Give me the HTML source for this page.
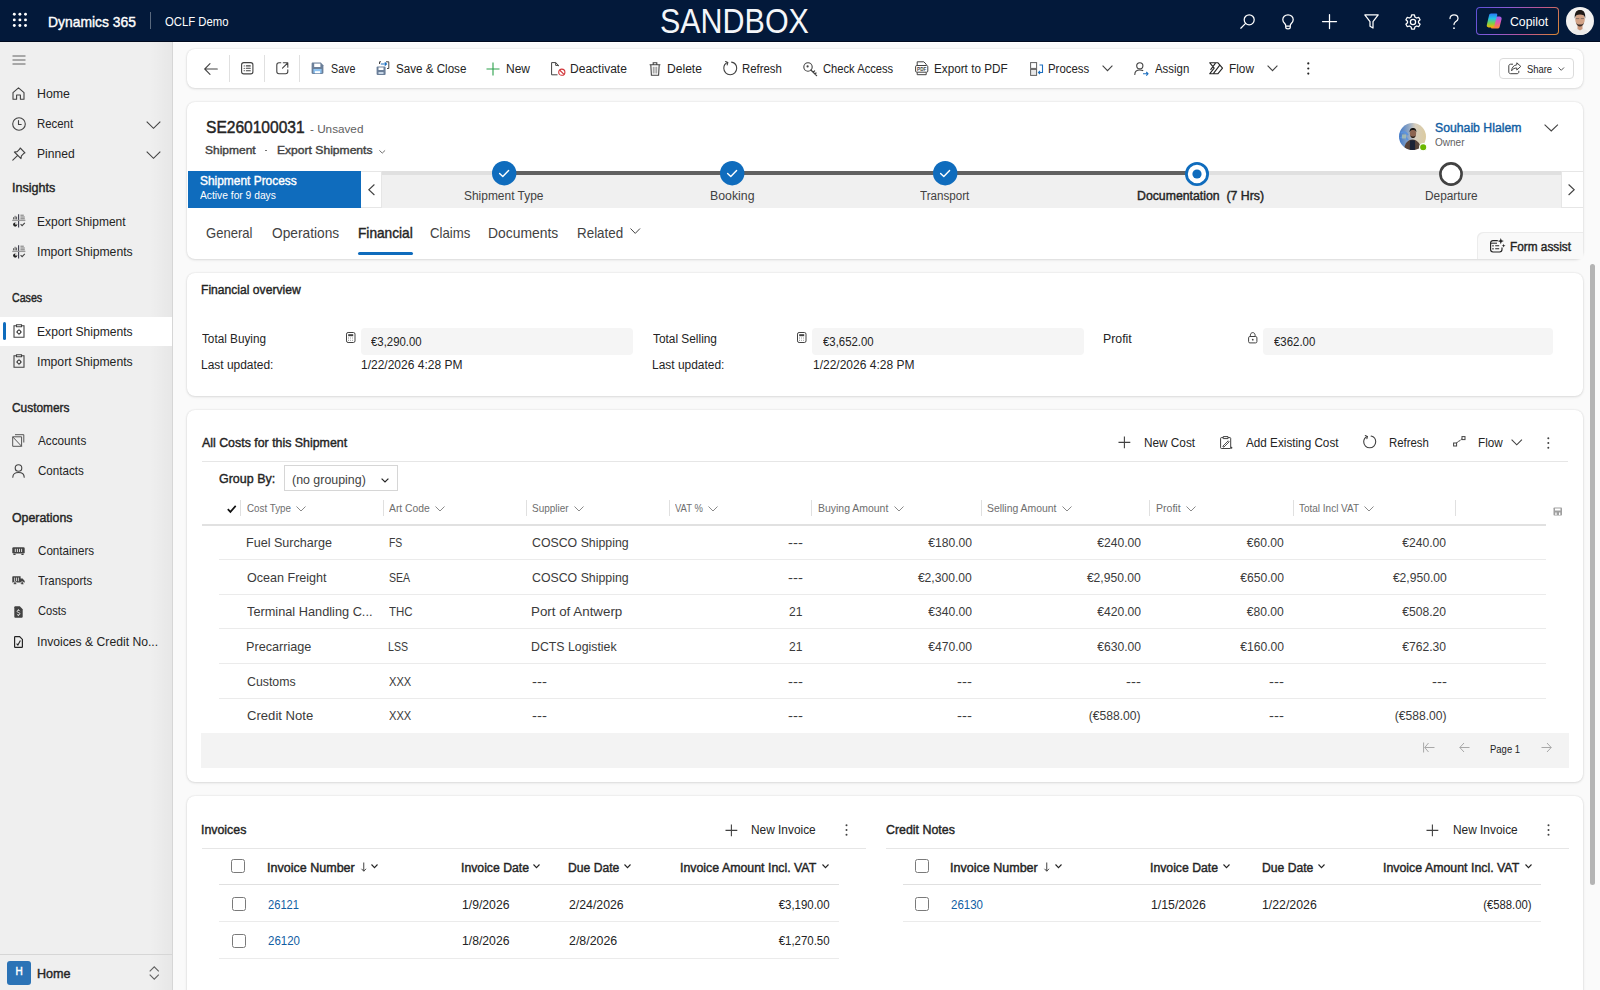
<!DOCTYPE html>
<html><head><meta charset="utf-8"><style>
html,body{margin:0;padding:0;width:1600px;height:990px;overflow:hidden;background:#fafafa;}
body{position:relative;font-family:"Liberation Sans", sans-serif;}
.t{position:absolute;white-space:pre;}
svg{overflow:visible}
</style></head><body>
<div style="position:absolute;left:0px;top:0px;width:1600px;height:42px;background:#03193a"></div>
<div style="position:absolute;left:0px;top:41px;width:1600px;height:1px;background:#000a1f"></div>
<div style="position:absolute;left:0px;top:42px;width:172px;height:948px;background:#efefef"></div>
<div style="position:absolute;left:150px;top:42px;width:22px;height:948px;background:linear-gradient(to right, rgba(0,0,0,0), rgba(0,0,0,0.035))"></div>
<div style="position:absolute;left:172px;top:42px;width:1px;height:948px;background:#d6d6d6"></div>
<div style="position:absolute;left:173px;top:42px;width:1427px;height:1px;background:#ffffff"></div>
<div style="position:absolute;left:187px;top:49px;width:1396px;height:39px;background:#fff;border-radius:8px;box-shadow:0 0 2px rgba(0,0,0,0.12),0 1px 3px rgba(0,0,0,0.10)"></div>
<div style="position:absolute;left:187px;top:102px;width:1396px;height:157px;background:#fff;border-radius:8px;box-shadow:0 0 2px rgba(0,0,0,0.12),0 1px 3px rgba(0,0,0,0.10)"></div>
<div style="position:absolute;left:187px;top:273px;width:1396px;height:123px;background:#fff;border-radius:8px;box-shadow:0 0 2px rgba(0,0,0,0.12),0 1px 3px rgba(0,0,0,0.10)"></div>
<div style="position:absolute;left:187px;top:410px;width:1396px;height:372px;background:#fff;border-radius:8px;box-shadow:0 0 2px rgba(0,0,0,0.12),0 1px 3px rgba(0,0,0,0.10)"></div>
<div style="position:absolute;left:187px;top:796px;width:1396px;height:220px;background:#fff;border-radius:8px;box-shadow:0 0 2px rgba(0,0,0,0.12),0 1px 3px rgba(0,0,0,0.10)"></div>
<div style="position:absolute;left:1590px;top:264px;width:5px;height:621px;background:#b4b4b4;border-radius:3px"></div>
<svg style="position:absolute;left:13px;top:13px;" width="14" height="14" viewBox="0 0 14 14" fill="none"><circle cx="1.3" cy="1.3" r="1.45" fill="#fff"/><circle cx="1.3" cy="6.9" r="1.45" fill="#fff"/><circle cx="1.3" cy="12.5" r="1.45" fill="#fff"/><circle cx="6.9" cy="1.3" r="1.45" fill="#fff"/><circle cx="6.9" cy="6.9" r="1.45" fill="#fff"/><circle cx="6.9" cy="12.5" r="1.45" fill="#fff"/><circle cx="12.5" cy="1.3" r="1.45" fill="#fff"/><circle cx="12.5" cy="6.9" r="1.45" fill="#fff"/><circle cx="12.5" cy="12.5" r="1.45" fill="#fff"/></svg>
<div style="position:absolute;left:150px;top:12px;width:1px;height:17px;background:rgba(255,255,255,0.35)"></div>
<svg style="position:absolute;left:1240px;top:14px;" width="15" height="15" viewBox="0 0 15 15" fill="none"><circle cx="9.2" cy="5.8" r="5" stroke="#fff" stroke-width="1.25" stroke-linecap="round" stroke-linejoin="round"/><path d="M5.6 9.4 L0.8 14.2" stroke="#fff" stroke-width="1.25" stroke-linecap="round" stroke-linejoin="round"/></svg>
<svg style="position:absolute;left:1282px;top:14px;" width="12" height="16" viewBox="0 0 12 16" fill="none"><path d="M6 0.8 C2.9 0.8 0.8 3 0.8 5.7 C0.8 7.6 1.9 8.8 2.9 9.8 C3.5 10.4 3.7 11 3.7 11.8 L3.7 13 C3.7 14.2 4.5 14.9 6 14.9 C7.5 14.9 8.3 14.2 8.3 13 L8.3 11.8 C8.3 11 8.5 10.4 9.1 9.8 C10.1 8.8 11.2 7.6 11.2 5.7 C11.2 3 9.1 0.8 6 0.8 Z M3.8 12 H8.2" stroke="#fff" stroke-width="1.25" stroke-linecap="round" stroke-linejoin="round"/></svg>
<svg style="position:absolute;left:1322px;top:14px;" width="15" height="15" viewBox="0 0 15 15" fill="none"><path d="M7.5 0.5 V14.5 M0.5 7.5 H14.5" stroke="#fff" stroke-width="1.25" stroke-linecap="round" stroke-linejoin="round"/></svg>
<svg style="position:absolute;left:1364px;top:14px;" width="15" height="15" viewBox="0 0 15 15" fill="none"><path d="M0.8 0.9 H14.2 L9 7.6 V14 L6 12.3 V7.6 Z" stroke="#fff" stroke-width="1.25" stroke-linecap="round" stroke-linejoin="round"/></svg>
<svg style="position:absolute;left:1405px;top:14px;" width="16" height="16" viewBox="0 0 16 16" fill="none"><circle cx="8" cy="8" r="2.6" stroke="#fff" stroke-width="1.25" stroke-linecap="round" stroke-linejoin="round"/><path d="M6.6 0.9 H9.4 L9.9 3 L11.6 4 L13.7 3.3 L15.1 5.7 L13.5 7.2 V8.8 L15.1 10.3 L13.7 12.7 L11.6 12 L9.9 13 L9.4 15.1 H6.6 L6.1 13 L4.4 12 L2.3 12.7 L0.9 10.3 L2.5 8.8 V7.2 L0.9 5.7 L2.3 3.3 L4.4 4 L6.1 3 Z" stroke="#fff" stroke-width="1.25" stroke-linecap="round" stroke-linejoin="round"/></svg>
<svg style="position:absolute;left:1449px;top:14px;" width="10" height="16" viewBox="0 0 10 16" fill="none"><path d="M1 4.5 C1 2.3 2.8 0.8 5 0.8 C7.2 0.8 9 2.3 9 4.4 C9 6.4 7.5 7 6.3 7.9 C5.4 8.6 5 9.3 5 10.6" stroke="#fff" stroke-width="1.25" stroke-linecap="round" stroke-linejoin="round"/><circle cx="5" cy="14.2" r="0.9" fill="#fff"/></svg>
<div style="position:absolute;left:1475.5px;top:7px;width:83.5px;height:28px;box-sizing:border-box;border:1.2px solid transparent;border-radius:4px;background:linear-gradient(#03193a,#03193a) padding-box, linear-gradient(120deg,#5b4fd6,#8a5bd6,#c0558f,#d8892f) border-box"></div>
<svg style="position:absolute;left:1486px;top:13px;" width="16.5" height="16" viewBox="0 0 16.5 16" fill="none"><defs><linearGradient id="cg1" x1="0" y1="0" x2="0" y2="1"><stop offset="0" stop-color="#2a7bf5"/><stop offset="0.35" stop-color="#22c3e6"/><stop offset="0.7" stop-color="#7bd14a"/><stop offset="1" stop-color="#f7b500"/></linearGradient><linearGradient id="cg2" x1="0" y1="0" x2="0" y2="1"><stop offset="0" stop-color="#9a5cf3"/><stop offset="0.5" stop-color="#e25aa8"/><stop offset="1" stop-color="#ff8a2a"/></linearGradient></defs><path d="M10.6 3.6 H13.6 C14.9 3.6 15.9 4.6 15.6 5.9 L13.6 13.9 C13.3 15 12.4 15.6 11.3 15.6 H6.2 C5.2 15.6 4.8 15 5.1 14.1 L7.6 5.1 C7.9 4.2 8.6 3.6 9.6 3.6 Z" fill="url(#cg2)"/><path d="M5 0.6 H10 C11 0.6 11.5 1.3 11.2 2.2 L8.4 12.4 C8.1 13.6 7.2 14.4 6 14.4 H2.6 C1.3 14.4 0.5 13.4 0.8 12.1 L3 2.4 C3.3 1.3 4 0.6 5 0.6 Z" fill="url(#cg1)"/></svg>
<svg style="position:absolute;left:1565.5px;top:6.8px;" width="28" height="28" viewBox="0 0 28 28" fill="none"><defs><clipPath id="av"><circle cx="14" cy="14" r="14"/></clipPath></defs><g clip-path="url(#av)"><rect width="28" height="28" fill="#f3f2f1"/><path d="M4 30 C5 23 9 21.5 14 21.5 C19 21.5 23 23 24 30 Z" fill="#ecebea"/><path d="M11.5 18 L16.5 18 L16.5 22 L14 23.5 L11.5 22 Z" fill="#c9967a"/><ellipse cx="14" cy="12.5" rx="4.8" ry="6.2" fill="#d2a286"/><path d="M8.8 11.5 C8.2 5.5 10.5 3 14 3 C17.5 3 19.8 5.5 19.2 11.5 C18.6 8.5 17 7.6 14 7.6 C11 7.6 9.4 8.5 8.8 11.5 Z" fill="#1f1a17"/><path d="M10 15.5 C10.8 18.6 12.2 19.4 14 19.4 C15.8 19.4 17.2 18.6 18 15.5 C17.2 17.2 15.8 17.6 14 17.6 C12.2 17.6 10.8 17.2 10 15.5 Z" fill="#3b2c25"/><path d="M9.8 11.6 H13.2 M14.8 11.6 H18.2" stroke="#444" stroke-width="0.5"/></g></svg>
<svg style="position:absolute;left:12px;top:55px;" width="14" height="10" viewBox="0 0 14 10" fill="none"><path d="M0.5 1 H13.5 M0.5 5 H13.5 M0.5 9 H13.5" stroke="#616161" stroke-width="1"/></svg>
<svg style="position:absolute;left:12px;top:87px;" width="13" height="13" viewBox="0 0 13 13" fill="none"><path d="M1 5.6 L6.5 0.9 L12 5.6 V12.2 H8.4 V8 H4.6 V12.2 H1 Z" stroke="#424242" stroke-width="1.1" stroke-linecap="round" stroke-linejoin="round"/></svg>
<svg style="position:absolute;left:12px;top:117px;" width="14" height="14" viewBox="0 0 14 14" fill="none"><circle cx="7" cy="7" r="6.3" stroke="#424242" stroke-width="1.1" stroke-linecap="round" stroke-linejoin="round"/><path d="M6.5 3.6 V7.5 H9.2" stroke="#424242" stroke-width="1.1" stroke-linecap="round" stroke-linejoin="round"/></svg>
<svg style="position:absolute;left:146px;top:120.5px;" width="15" height="8" viewBox="0 0 15 8" fill="none"><path d="M0.7 0.7 L7.5 7.3 L14.3 0.7" stroke="#424242" stroke-width="1.1" fill="none"/></svg>
<svg style="position:absolute;left:12px;top:147px;" width="14" height="14" viewBox="0 0 14 14" fill="none"><path d="M8.2 1 L13 5.8 L11.6 6.6 L9.4 8.8 L9 11.6 L2.4 5 L5.2 4.6 L7.4 2.4 Z M5.2 8.8 L0.8 13.2" stroke="#424242" stroke-width="1.1" stroke-linecap="round" stroke-linejoin="round"/></svg>
<svg style="position:absolute;left:146px;top:150.5px;" width="15" height="8" viewBox="0 0 15 8" fill="none"><path d="M0.7 0.7 L7.5 7.3 L14.3 0.7" stroke="#424242" stroke-width="1.1" fill="none"/></svg>
<svg style="position:absolute;left:11.7px;top:214px;" width="14" height="14" viewBox="0 0 14 14" fill="none"><path d="M6.6 0.2 V13.6" stroke="#3a3a4a" stroke-width="1.1"/><path d="M0.2 6.4 H13.4" stroke="#9a9a9a" stroke-width="1.3"/><path d="M1.6 5.4 V3.2 M3.1 5.4 V1.8 M4.6 5.4 V2.6" stroke="#555" stroke-width="1"/><path d="M8.4 1.2 H11.8 M8.4 3 H12.8 M8.4 4.8 H12.8" stroke="#777" stroke-width="1"/><circle cx="3.2" cy="10.6" r="2.1" fill="#242424"/><path d="M3.2 10.6 V8.5 A2.1 2.1 0 0 1 5.3 10.6 Z" fill="#efefef"/><path d="M8.6 10.2 L10.1 11.7 L12.8 8.9" stroke="#444" stroke-width="1.1" fill="none"/></svg>
<svg style="position:absolute;left:11.7px;top:245px;" width="14" height="14" viewBox="0 0 14 14" fill="none"><path d="M6.6 0.2 V13.6" stroke="#3a3a4a" stroke-width="1.1"/><path d="M0.2 6.4 H13.4" stroke="#9a9a9a" stroke-width="1.3"/><path d="M1.6 5.4 V3.2 M3.1 5.4 V1.8 M4.6 5.4 V2.6" stroke="#555" stroke-width="1"/><path d="M8.4 1.2 H11.8 M8.4 3 H12.8 M8.4 4.8 H12.8" stroke="#777" stroke-width="1"/><circle cx="3.2" cy="10.6" r="2.1" fill="#242424"/><path d="M3.2 10.6 V8.5 A2.1 2.1 0 0 1 5.3 10.6 Z" fill="#efefef"/><path d="M8.6 10.2 L10.1 11.7 L12.8 8.9" stroke="#444" stroke-width="1.1" fill="none"/></svg>
<div style="position:absolute;left:0px;top:316.5px;width:172px;height:29px;background:#fff"></div>
<div style="position:absolute;left:3.3px;top:322px;width:2.5px;height:18px;background:#0f6cbd;border-radius:2px"></div>
<svg style="position:absolute;left:12.5px;top:324px;" width="12" height="14" viewBox="0 0 12 14" fill="none"><path d="M3.5 1.8 H1 V13.2 H11 V1.8 H8.5 M3.5 0.8 H8.5 V2.8 H3.5 Z" stroke="#424242" stroke-width="1.1" fill="none"/><circle cx="6" cy="8" r="1.7" stroke="#424242" stroke-width="1.1" fill="none"/><path d="M6 4.9 V5.8 M6 10.2 V11.1 M3.2 8 H4 M8 8 H8.8" stroke="#424242" stroke-width="1"/></svg>
<svg style="position:absolute;left:12.5px;top:354px;" width="12" height="14" viewBox="0 0 12 14" fill="none"><path d="M3.5 1.8 H1 V13.2 H11 V1.8 H8.5 M3.5 0.8 H8.5 V2.8 H3.5 Z" stroke="#424242" stroke-width="1.1" fill="none"/><circle cx="6" cy="8" r="1.7" stroke="#424242" stroke-width="1.1" fill="none"/><path d="M6 4.9 V5.8 M6 10.2 V11.1 M3.2 8 H4 M8 8 H8.8" stroke="#424242" stroke-width="1"/></svg>
<svg style="position:absolute;left:12px;top:434px;" width="13" height="13" viewBox="0 0 13 13" fill="none"><path d="M3 0.7 H11.8 V8.5 M0.7 2.8 H9.6 V12.3 H0.7 Z M0.7 2.8 L9.6 12.3" stroke="#555" stroke-width="1" fill="none"/></svg>
<svg style="position:absolute;left:12px;top:464px;" width="13" height="14" viewBox="0 0 13 14" fill="none"><circle cx="6.5" cy="4" r="3.3" stroke="#424242" stroke-width="1.1" stroke-linecap="round" stroke-linejoin="round"/><path d="M0.8 13.3 C0.8 9.8 3.2 8.5 6.5 8.5 C9.8 8.5 12.2 9.8 12.2 13.3" stroke="#424242" stroke-width="1.1" stroke-linecap="round" stroke-linejoin="round"/></svg>
<svg style="position:absolute;left:12.2px;top:546.8px;" width="13" height="8.5" viewBox="0 0 13 8.5" fill="none"><rect x="0.3" y="0.3" width="12.4" height="6.2" rx="1.3" fill="#424242"/><path d="M3.3 1.8 V5 M5.4 1.8 V5 M7.5 1.8 V5 M9.6 1.8 V5" stroke="#efefef" stroke-width="0.9"/><path d="M1.4 7.4 H3.6 M9.4 7.4 H11.6" stroke="#424242" stroke-width="1.4"/></svg>
<svg style="position:absolute;left:12.2px;top:576.2px;" width="13" height="9" viewBox="0 0 13 9" fill="none"><path d="M1.3 0.3 H8.6 V6.6 H0.3 V1.3 C0.3 0.7 0.7 0.3 1.3 0.3 Z M8.6 2.4 H10.6 L12.7 5 V6.6 H8.6 Z" fill="#424242"/><path d="M2.6 1.6 V5.2 M4.5 1.6 V5.2 M6.4 1.6 V5.2" stroke="#efefef" stroke-width="0.8"/><circle cx="3" cy="7.2" r="1.5" fill="#424242" stroke="#efefef" stroke-width="0.7"/><circle cx="10.2" cy="7.2" r="1.5" fill="#424242" stroke="#efefef" stroke-width="0.7"/></svg>
<svg style="position:absolute;left:14px;top:605.8px;" width="9" height="12" viewBox="0 0 9 12" fill="none"><path d="M0.3 1.2 C0.3 0.7 0.7 0.3 1.2 0.3 H5.8 L8.7 3.2 V10.8 C8.7 11.3 8.3 11.7 7.8 11.7 H1.2 C0.7 11.7 0.3 11.3 0.3 10.8 Z" fill="#424242"/><path d="M5.9 5.1 C5.6 4.6 5.1 4.3 4.4 4.3 C3.6 4.3 3.1 4.8 3.1 5.4 C3.1 6.1 3.7 6.3 4.5 6.5 C5.3 6.7 5.9 7 5.9 7.7 C5.9 8.4 5.3 8.9 4.4 8.9 C3.7 8.9 3.2 8.6 2.9 8.1 M4.4 3.3 V4.3 M4.4 8.9 V9.9" stroke="#efefef" stroke-width="0.9" fill="none"/></svg>
<svg style="position:absolute;left:14px;top:635.8px;" width="9" height="12" viewBox="0 0 9 12" fill="none"><path d="M0.6 1.2 C0.6 0.9 0.9 0.6 1.2 0.6 H5.6 L8.4 3.4 V10.8 C8.4 11.1 8.1 11.4 7.8 11.4 H1.2 C0.9 11.4 0.6 11.1 0.6 10.8 Z" stroke="#242424" stroke-width="1.2" fill="none"/><path d="M2.6 7.6 L3.9 9 L6.4 4.6" stroke="#242424" stroke-width="1.1" fill="none"/></svg>
<div style="position:absolute;left:0px;top:954px;width:172px;height:1px;background:#d6d6d6"></div>
<div style="position:absolute;left:7px;top:961px;width:24.4px;height:24.4px;background:#2b73b6;border-radius:3px"></div>
<svg style="position:absolute;left:148.5px;top:965.5px;" width="10.5" height="14" viewBox="0 0 10.5 14" fill="none"><path d="M0.7 5.3 L5.25 0.8 L9.8 5.3 M0.7 8.7 L5.25 13.2 L9.8 8.7" stroke="#616161" stroke-width="1.1" fill="none"/></svg>
<svg style="position:absolute;left:204px;top:62.5px;" width="14" height="12" viewBox="0 0 14 12" fill="none"><path d="M6 0.7 L0.7 6 L6 11.3 M0.7 6 H13.3" stroke="#424242" stroke-width="1.1" stroke-linecap="round" fill="none"/></svg>
<div style="position:absolute;left:229px;top:55px;width:1px;height:27px;background:#e0e0e0"></div>
<svg style="position:absolute;left:241px;top:62px;" width="12.5" height="12.5" viewBox="0 0 12.5 12.5" fill="none"><rect x="0.6" y="0.6" width="11.3" height="11.3" rx="2.2" stroke="#424242" stroke-width="1.1" stroke-linecap="round" stroke-linejoin="round" fill="none"/><path d="M3.2 3.8 V4 M3.2 6.2 V6.4 M3.2 8.6 V8.8 M5.3 3.9 H9.3 M5.3 6.3 H9.3 M5.3 8.7 H9.3" stroke="#424242" stroke-width="1.1" stroke-linecap="round"/></svg>
<div style="position:absolute;left:264px;top:55px;width:1px;height:27px;background:#e0e0e0"></div>
<svg style="position:absolute;left:276px;top:62px;" width="13" height="12.5" viewBox="0 0 13 12.5" fill="none"><path d="M4.8 0.8 H3 C1.7 0.8 0.8 1.7 0.8 3 V9.6 C0.8 10.9 1.7 11.8 3 11.8 H9.6 C10.9 11.8 11.8 10.9 11.8 9.6 V7.8 M7.3 0.8 H11.8 V5.3 M11.8 0.8 L6.5 6.1" stroke="#424242" stroke-width="1.1" stroke-linecap="round" stroke-linejoin="round" fill="none"/></svg>
<div style="position:absolute;left:299px;top:55px;width:1px;height:27px;background:#e0e0e0"></div>
<svg style="position:absolute;left:311px;top:62px;" width="13" height="12.5" viewBox="0 0 13 12.5" fill="none"><path d="M1.8 0.6 H9.8 L12.4 3.2 V10.8 C12.4 11.5 11.8 12 11.1 12 H1.8 C1.1 12 0.6 11.5 0.6 10.8 V1.8 C0.6 1.1 1.1 0.6 1.8 0.6 Z" fill="#6b7f99"/><rect x="3.2" y="1.6" width="6.2" height="3.4" fill="#fff"/><rect x="2.4" y="7" width="8.2" height="4.2" fill="#8fc4f2"/><rect x="4" y="9.2" width="5" height="2" fill="#fff"/></svg>
<svg style="position:absolute;left:375.6px;top:61px;" width="13.5" height="14.5" viewBox="0 0 13.5 14.5" fill="none"><rect x="0.6" y="5.5" width="9" height="8.5" rx="1" fill="#6b7f99"/><rect x="2.5" y="6.5" width="5" height="2.5" fill="#fff"/><rect x="2.5" y="11" width="5" height="2" fill="#c7d6e6"/><path d="M3.5 3 V0.8 H5 M10 0.8 H12.8 V7.5 H11" stroke="#424242" stroke-width="1"/><path d="M4.8 3 H10.5 M8.8 1.4 L10.5 3 L8.8 4.6" stroke="#1c6fc0" stroke-width="1.1" fill="none"/></svg>
<svg style="position:absolute;left:486px;top:61.5px;" width="14" height="14" viewBox="0 0 14 14" fill="none"><path d="M7 0.5 V13.5 M0.5 7 H13.5" stroke="#2aa04a" stroke-width="1.1"/></svg>
<svg style="position:absolute;left:551px;top:61.5px;" width="15" height="14" viewBox="0 0 15 14" fill="none"><path d="M7.5 4.2 V3.4 L4.7 0.6 H0.6 V12.8 H6.5 M4.7 0.6 V3.4 H7.5" stroke="#424242" stroke-width="1" fill="none"/><circle cx="10.8" cy="10.2" r="3.1" stroke="#d13438" stroke-width="1.1" fill="#fff"/><path d="M8.6 8 L13 12.4" stroke="#d13438" stroke-width="1.1"/></svg>
<svg style="position:absolute;left:648.5px;top:61.5px;" width="12" height="14" viewBox="0 0 12 14" fill="none"><path d="M0.6 2.8 H11.4 M4.2 2.8 V0.8 H7.8 V2.8 M1.8 2.8 L2.4 13.2 H9.6 L10.2 2.8" stroke="#424242" stroke-width="1.1" fill="none"/><path d="M4.3 4.8 V11.5 M6 4.8 V11.5 M7.7 4.8 V11.5" stroke="#777" stroke-width="0.8"/></svg>
<svg style="position:absolute;left:722.5px;top:61px;" width="14.5" height="14.5" viewBox="0 0 14.5 14.5" fill="none"><path d="M4.6 1.6 C2.3 2.5 0.8 4.7 0.8 7.3 C0.8 10.8 3.6 13.7 7.2 13.7 C10.8 13.7 13.7 10.8 13.7 7.3 C13.7 4.2 11.6 1.7 8.6 1.1" stroke="#424242" stroke-width="1.1" fill="none" stroke-linecap="round"/><path d="M2.6 0.6 L4.8 1.6 L4.2 3.9" stroke="#424242" stroke-width="1.1" fill="none" stroke-linecap="round" stroke-linejoin="round"/></svg>
<svg style="position:absolute;left:802.5px;top:61.5px;" width="15" height="14.5" viewBox="0 0 15 14.5" fill="none"><circle cx="5" cy="5" r="4.2" stroke="#424242" stroke-width="1.1" fill="none"/><circle cx="4.6" cy="4.4" r="1.1" fill="#424242"/><path d="M7.9 8 L13.6 13.6 M10.2 10.3 L11.6 8.9 M12 12 L13 11" stroke="#424242" stroke-width="1.3" stroke-linecap="round"/></svg>
<svg style="position:absolute;left:915px;top:61px;" width="13.5" height="14.5" viewBox="0 0 13.5 14.5" fill="none"><path d="M2.2 4.5 V0.8 H8.8 L11.2 3.2 V4.5 M2.2 11.2 V13.7 H11.2 V11.2" stroke="#424242" stroke-width="1" fill="none"/><rect x="0.6" y="4.5" width="12.2" height="6.7" rx="1.2" stroke="#424242" stroke-width="1" fill="#fff"/><text x="6.7" y="9.6" font-size="4.6" font-weight="700" font-family="Liberation Sans" fill="#424242" text-anchor="middle">PDF</text></svg>
<svg style="position:absolute;left:1030px;top:61.5px;" width="13.5" height="14" viewBox="0 0 13.5 14" fill="none"><rect x="0.6" y="0.6" width="6" height="5.8" stroke="#616161" stroke-width="1" fill="none"/><rect x="0.6" y="7.4" width="6" height="6" stroke="#616161" stroke-width="1" fill="#e8e8e8"/><path d="M9.5 3 H12.5 V10.5 H8.5 M10 9 L8.5 10.5 L10 12" stroke="#1c6fc0" stroke-width="1.1" fill="none"/></svg>
<svg style="position:absolute;left:1101.5px;top:64.5px;" width="11" height="6.5" viewBox="0 0 11 6.5" fill="none"><path d="M0.6 0.6 L5.5 5.6 L10.4 0.6" stroke="#424242" stroke-width="1.1" fill="none"/></svg>
<svg style="position:absolute;left:1134px;top:61.5px;" width="15" height="14.5" viewBox="0 0 15 14.5" fill="none"><circle cx="5.8" cy="3.8" r="3.1" stroke="#424242" stroke-width="1.1" fill="none"/><path d="M0.8 12.5 C0.8 9.5 2.8 8 5.8 8 C7 8 8 8.2 8.8 8.6" stroke="#424242" stroke-width="1.1" fill="none" stroke-linecap="round"/><path d="M9 11.8 H14 M12.3 10 L14 11.8 L12.3 13.6" stroke="#1c6fc0" stroke-width="1.1" fill="none"/></svg>
<svg style="position:absolute;left:1209px;top:62px;" width="14.5" height="12.5" viewBox="0 0 14.5 12.5" fill="none"><path d="M0.8 0.8 H9 L13.5 6.2 L9 11.7 H0.8 L5.2 6.2 Z M4.5 11.4 L11 2.8 M1.5 7.8 L6.5 1.2" stroke="#242424" stroke-width="1.1" fill="none" stroke-linejoin="round"/></svg>
<svg style="position:absolute;left:1266.5px;top:64.5px;" width="11" height="6.5" viewBox="0 0 11 6.5" fill="none"><path d="M0.6 0.6 L5.5 5.6 L10.4 0.6" stroke="#424242" stroke-width="1.1" fill="none"/></svg>
<svg style="position:absolute;left:1306.5px;top:61.5px;" width="3" height="13" viewBox="0 0 3 13" fill="none"><circle cx="1.3" cy="1.4" r="1.1" fill="#242424"/><circle cx="1.3" cy="6.5" r="1.1" fill="#242424"/><circle cx="1.3" cy="11.6" r="1.1" fill="#242424"/></svg>
<div style="position:absolute;left:1498.5px;top:58px;width:75px;height:20.5px;box-sizing:border-box;border:1px solid #dcdcdc;border-radius:4px;background:#fff"></div>
<svg style="position:absolute;left:1508px;top:62px;" width="13.5" height="12.5" viewBox="0 0 13.5 12.5" fill="none"><path d="M5 2.2 H2.6 C1.5 2.2 0.8 3 0.8 4 V10 C0.8 11 1.5 11.7 2.6 11.7 H9 C10 11.7 10.8 11 10.8 10 V8.8" stroke="#424242" stroke-width="1" fill="none"/><path d="M8.8 0.8 L12.8 4.4 L8.8 8 V6 C6.5 6 4.8 6.8 3.6 8.8 C3.8 5.6 5.6 3.2 8.8 2.8 Z" stroke="#424242" stroke-width="1" fill="none" stroke-linejoin="round"/></svg>
<svg style="position:absolute;left:1558px;top:66.5px;" width="6.5" height="4" viewBox="0 0 6.5 4" fill="none"><path d="M0.5 0.5 L3.25 3.3 L6 0.5" stroke="#424242" stroke-width="0.9" fill="none"/></svg>
<div style="position:absolute;left:265.2px;top:149.8px;width:1.6px;height:1.6px;background:#616161;border-radius:1px"></div>
<svg style="position:absolute;left:378.75px;top:149.5px;" width="6.5" height="3.5" viewBox="0 0 6.5 3.5" fill="none"><path d="M0.4 0.4 L3.25 3.1 L6.1 0.4" stroke="#616161" stroke-width="0.9" fill="none"/></svg>
<div style="position:absolute;left:188px;top:171px;width:173px;height:37px;background:#0f6cbd"></div>
<div style="position:absolute;left:361px;top:171px;width:20.5px;height:37px;box-sizing:border-box;background:#fff;border:1px solid #e6e6e6;border-left:0"></div>
<svg style="position:absolute;left:367.5px;top:184px;" width="7" height="11.5" viewBox="0 0 7 11.5" fill="none"><path d="M6.4 0.5 L0.8 5.75 L6.4 11" stroke="#424242" stroke-width="1.1" fill="none"/></svg>
<div style="position:absolute;left:381.5px;top:172px;width:1180px;height:36px;background:#f0f0f0"></div>
<div style="position:absolute;left:381.5px;top:171.2px;width:1180px;height:3.8px;background:#e0e0e0"></div>
<div style="position:absolute;left:504px;top:171.2px;width:693px;height:3.8px;background:#616161"></div>
<div style="position:absolute;left:1561px;top:171px;width:21.5px;height:37px;box-sizing:border-box;background:#fff;border:1px solid #e6e6e6;border-right:0"></div>
<svg style="position:absolute;left:1568px;top:184px;" width="7" height="11.5" viewBox="0 0 7 11.5" fill="none"><path d="M0.6 0.5 L6.2 5.75 L0.6 11" stroke="#424242" stroke-width="1.1" fill="none"/></svg>
<svg style="position:absolute;left:491.8px;top:161.4px;" width="24.4" height="24.4" viewBox="0 0 24.4 24.4" fill="none"><circle cx="12.2" cy="12.2" r="12.2" fill="#0f6cbd"/><path d="M7.6 12.4 L10.8 15.4 L16.6 9.4" stroke="#fff" stroke-width="1.4" fill="none" stroke-linecap="round" stroke-linejoin="round"/></svg>
<svg style="position:absolute;left:719.8px;top:161.4px;" width="24.4" height="24.4" viewBox="0 0 24.4 24.4" fill="none"><circle cx="12.2" cy="12.2" r="12.2" fill="#0f6cbd"/><path d="M7.6 12.4 L10.8 15.4 L16.6 9.4" stroke="#fff" stroke-width="1.4" fill="none" stroke-linecap="round" stroke-linejoin="round"/></svg>
<svg style="position:absolute;left:932.8px;top:161.4px;" width="24.4" height="24.4" viewBox="0 0 24.4 24.4" fill="none"><circle cx="12.2" cy="12.2" r="12.2" fill="#0f6cbd"/><path d="M7.6 12.4 L10.8 15.4 L16.6 9.4" stroke="#fff" stroke-width="1.4" fill="none" stroke-linecap="round" stroke-linejoin="round"/></svg>
<svg style="position:absolute;left:1185px;top:161.5px;" width="24" height="24" viewBox="0 0 24 24" fill="none"><circle cx="12" cy="12" r="10.6" stroke="#0f6cbd" stroke-width="2.8" fill="#fff"/><circle cx="12" cy="12" r="4.6" fill="#0f6cbd"/></svg>
<svg style="position:absolute;left:1439px;top:161.5px;" width="24" height="24" viewBox="0 0 24 24" fill="none"><circle cx="12" cy="12" r="10.6" stroke="#424242" stroke-width="2.6" fill="#fff"/></svg>
<svg style="position:absolute;left:1399px;top:122.6px;" width="27" height="27" viewBox="0 0 27 27" fill="none"><defs><clipPath id="ow"><circle cx="13.5" cy="13.5" r="13.5"/></clipPath><linearGradient id="owg" x1="0" y1="0" x2="1" y2="0"><stop offset="0" stop-color="#3f78c9"/><stop offset="0.35" stop-color="#8fa6c4"/><stop offset="0.6" stop-color="#d6cdbd"/><stop offset="1" stop-color="#dccb9f"/></linearGradient></defs><g clip-path="url(#ow)"><rect width="27" height="27" fill="url(#owg)"/><path d="M2 10 C4 8 7 9 9 12 M1.5 15 C4 13 7 14 9 17" stroke="#5b93de" stroke-width="1.6" fill="none"/><rect x="3" y="11.5" width="4" height="4" fill="#b9c8a8" opacity="0.7"/><path d="M5 28 C5.5 20 8.5 17.2 13.5 16.6 C18.5 17.2 21.5 20 22 28 Z" fill="#57433a"/><path d="M10.8 28 L11 17.6 C12.2 17 14.8 17 16 17.6 L16.2 28 Z" fill="#1b2236"/><ellipse cx="14" cy="10.6" rx="3.1" ry="4" fill="#8c6450"/><path d="M11.3 12.2 C11.8 14.5 12.8 15 14 15 C15.2 15 16.2 14.5 16.7 12.2 C16 13.2 15 13.4 14 13.4 C13 13.4 12 13.2 11.3 12.2 Z" fill="#2e2119"/><path d="M10.7 9.6 C10.3 6.2 11.9 4.9 14 4.9 C16.1 4.9 17.7 6.2 17.3 9.6 C16.8 7.6 15.6 7 14 7 C12.4 7 11.2 7.6 10.7 9.6 Z" fill="#17120f"/></g></svg>
<svg style="position:absolute;left:1419px;top:143px;" width="8.5" height="8.5" viewBox="0 0 8.5 8.5" fill="none"><circle cx="4.2" cy="4.2" r="3.6" fill="#6bb700" stroke="#fff" stroke-width="1.1"/></svg>
<svg style="position:absolute;left:1544px;top:124px;" width="14.5" height="7.5" viewBox="0 0 14.5 7.5" fill="none"><path d="M0.6 0.6 L7.25 6.9 L13.9 0.6" stroke="#424242" stroke-width="1.1" fill="none"/></svg>
<svg style="position:absolute;left:630px;top:228px;" width="10.5" height="6" viewBox="0 0 10.5 6" fill="none"><path d="M0.5 0.5 L5.25 5.4 L10 0.5" stroke="#424242" stroke-width="1" fill="none"/></svg>
<div style="position:absolute;left:358px;top:252px;width:55px;height:3px;background:#0f6cbd;border-radius:2px"></div>
<div style="position:absolute;left:1477px;top:232px;width:106px;height:27px;background:#f9f9f9;border-radius:6px 0 0 0;box-shadow:inset 1px 1px 0 #ececec"></div>
<svg style="position:absolute;left:1490px;top:237.5px;" width="15.5" height="14.5" viewBox="0 0 15.5 14.5" fill="none"><path d="M7.8 2.6 H3 C1.6 2.6 0.6 3.6 0.6 5 V11.6 C0.6 13 1.6 14 3 14 H9.6 C11 14 12 13 12 11.6 V9.6" stroke="#242424" stroke-width="1.15" fill="none"/><path d="M0.8 5.2 H7" stroke="#242424" stroke-width="1"/><path d="M3 7.8 V7.9 M3 10.8 V10.9" stroke="#242424" stroke-width="1.4" stroke-linecap="round"/><path d="M5.2 7.8 H9.2 M5.2 10.8 H9.2" stroke="#242424" stroke-width="1.1"/><path d="M10.8 0 L11.6 2.3 L13.9 3.1 L11.6 3.9 L10.8 6.2 L10 3.9 L7.7 3.1 L10 2.3 Z" fill="#242424"/><path d="M13.6 5.8 L14.1 7.2 L15.5 7.7 L14.1 8.2 L13.6 9.6 L13.1 8.2 L11.7 7.7 L13.1 7.2 Z" fill="#242424"/></svg>
<svg style="position:absolute;left:345.6px;top:332px;" width="9.5" height="11" viewBox="0 0 9.5 11" fill="none"><rect x="0.5" y="0.5" width="8.5" height="10" rx="1.6" stroke="#424242" stroke-width="1" fill="none"/><rect x="2.2" y="2.2" width="5" height="2" fill="#424242"/><path d="M2.4 6 H3 M4.5 6 H5 M6.5 6 H7 M2.4 8.3 H3 M4.5 8.3 H5 M6.5 8.3 H7" stroke="#424242" stroke-width="1"/></svg>
<div style="position:absolute;left:360.6px;top:328px;width:272px;height:26.5px;background:#f5f5f5;border-radius:4px"></div>
<svg style="position:absolute;left:797.2px;top:332px;" width="9.5" height="11" viewBox="0 0 9.5 11" fill="none"><rect x="0.5" y="0.5" width="8.5" height="10" rx="1.6" stroke="#424242" stroke-width="1" fill="none"/><rect x="2.2" y="2.2" width="5" height="2" fill="#424242"/><path d="M2.4 6 H3 M4.5 6 H5 M6.5 6 H7 M2.4 8.3 H3 M4.5 8.3 H5 M6.5 8.3 H7" stroke="#424242" stroke-width="1"/></svg>
<div style="position:absolute;left:812.2px;top:328px;width:271.5px;height:26.5px;background:#f5f5f5;border-radius:4px"></div>
<svg style="position:absolute;left:1248px;top:332px;" width="9.5" height="11.5" viewBox="0 0 9.5 11.5" fill="none"><path d="M2.4 4.5 V3.2 C2.4 1.7 3.4 0.6 4.75 0.6 C6.1 0.6 7.1 1.7 7.1 3.2 V4.5" stroke="#424242" stroke-width="1" fill="none"/><rect x="0.6" y="4.5" width="8.3" height="6.4" rx="1.3" stroke="#424242" stroke-width="1" fill="none"/><circle cx="4.75" cy="7.7" r="0.9" fill="#424242"/></svg>
<div style="position:absolute;left:1263px;top:328px;width:290px;height:26.5px;background:#f5f5f5;border-radius:4px"></div>
<svg style="position:absolute;left:1118px;top:435.5px;" width="12.8" height="12.8" viewBox="0 0 12.8 12.8" fill="none"><path d="M6.4 0.5 V12.3 M0.5 6.4 H12.3" stroke="#424242" stroke-width="1.1"/></svg>
<svg style="position:absolute;left:1220px;top:435.5px;" width="12.5" height="13" viewBox="0 0 12.5 13" fill="none"><path d="M3.2 1.6 H1.3 C0.9 1.6 0.6 1.9 0.6 2.3 V11.8 C0.6 12.2 0.9 12.5 1.3 12.5 H10 C10.4 12.5 10.7 12.2 10.7 11.8 V2.3 C10.7 1.9 10.4 1.6 10 1.6 H8 M3.2 0.6 H8 V2.6 H3.2 Z" stroke="#424242" stroke-width="1" fill="none"/><path d="M3 10 L8.2 4.8 L9.2 5.8 L4 11 H3 Z" stroke="#424242" stroke-width="0.9" fill="none"/><circle cx="11.4" cy="11.8" r="1" fill="#424242"/></svg>
<svg style="position:absolute;left:1362.5px;top:435px;" width="13.5" height="13.5" viewBox="0 0 13.5 13.5" fill="none"><path d="M4.2 1.5 C2.1 2.4 0.7 4.4 0.7 6.8 C0.7 10.1 3.4 12.8 6.7 12.8 C10 12.8 12.7 10.1 12.7 6.8 C12.7 3.9 10.8 1.6 8.1 1" stroke="#424242" stroke-width="1.1" fill="none" stroke-linecap="round"/><path d="M2.3 0.6 L4.4 1.5 L3.9 3.6" stroke="#424242" stroke-width="1.1" fill="none" stroke-linecap="round"/></svg>
<svg style="position:absolute;left:1452.5px;top:436px;" width="13" height="11" viewBox="0 0 13 11" fill="none"><rect x="0.6" y="7" width="3" height="3" stroke="#424242" stroke-width="1" fill="none"/><rect x="9" y="0.6" width="3" height="3" stroke="#424242" stroke-width="1" fill="none"/><path d="M3.6 7 C5 5 6 5.5 7 4.5 C8 3.5 8.5 3 9 3" stroke="#424242" stroke-width="1" fill="none"/></svg>
<svg style="position:absolute;left:1511px;top:439px;" width="11.5" height="6.5" viewBox="0 0 11.5 6.5" fill="none"><path d="M0.6 0.6 L5.75 5.8 L10.9 0.6" stroke="#424242" stroke-width="1.1" fill="none"/></svg>
<svg style="position:absolute;left:1546.5px;top:436.5px;" width="3" height="12" viewBox="0 0 3 12" fill="none"><circle cx="1.3" cy="1.2" r="1" fill="#424242"/><circle cx="1.3" cy="6" r="1" fill="#424242"/><circle cx="1.3" cy="10.8" r="1" fill="#424242"/></svg>
<div style="position:absolute;left:202px;top:461px;width:1366px;height:1px;background:#e6e6e6"></div>
<div style="position:absolute;left:284px;top:465px;width:114px;height:26px;box-sizing:border-box;border:1px solid #d6d6d6;background:#fff"></div>
<svg style="position:absolute;left:381px;top:477.5px;" width="8" height="5" viewBox="0 0 8 5" fill="none"><path d="M0.6 0.6 L4 4 L7.4 0.6" stroke="#242424" stroke-width="1.2" fill="none"/></svg>
<svg style="position:absolute;left:226.5px;top:504.5px;" width="9.5" height="8" viewBox="0 0 9.5 8" fill="none"><path d="M0.8 4.2 L3.4 6.9 L8.7 0.9" stroke="#111" stroke-width="1.7" fill="none"/></svg>
<div style="position:absolute;left:240px;top:500px;width:1px;height:16px;background:#e0e0e0"></div>
<svg style="position:absolute;left:295.9px;top:505.5px;" width="10" height="5.5" viewBox="0 0 10 5.5" fill="none"><path d="M0.5 0.5 L5 5 L9.5 0.5" stroke="#8a8a8a" stroke-width="1" fill="none"/></svg>
<div style="position:absolute;left:383px;top:500px;width:1px;height:16px;background:#e0e0e0"></div>
<svg style="position:absolute;left:434.8px;top:505.5px;" width="10" height="5.5" viewBox="0 0 10 5.5" fill="none"><path d="M0.5 0.5 L5 5 L9.5 0.5" stroke="#8a8a8a" stroke-width="1" fill="none"/></svg>
<div style="position:absolute;left:525.5px;top:500px;width:1px;height:16px;background:#e0e0e0"></div>
<svg style="position:absolute;left:574px;top:505.5px;" width="10" height="5.5" viewBox="0 0 10 5.5" fill="none"><path d="M0.5 0.5 L5 5 L9.5 0.5" stroke="#8a8a8a" stroke-width="1" fill="none"/></svg>
<div style="position:absolute;left:668.5px;top:500px;width:1px;height:16px;background:#e0e0e0"></div>
<svg style="position:absolute;left:708.0px;top:505.5px;" width="10" height="5.5" viewBox="0 0 10 5.5" fill="none"><path d="M0.5 0.5 L5 5 L9.5 0.5" stroke="#8a8a8a" stroke-width="1" fill="none"/></svg>
<div style="position:absolute;left:811px;top:500px;width:1px;height:16px;background:#e0e0e0"></div>
<svg style="position:absolute;left:893.5px;top:505.5px;" width="10" height="5.5" viewBox="0 0 10 5.5" fill="none"><path d="M0.5 0.5 L5 5 L9.5 0.5" stroke="#8a8a8a" stroke-width="1" fill="none"/></svg>
<div style="position:absolute;left:981px;top:500px;width:1px;height:16px;background:#e0e0e0"></div>
<svg style="position:absolute;left:1062px;top:505.5px;" width="10" height="5.5" viewBox="0 0 10 5.5" fill="none"><path d="M0.5 0.5 L5 5 L9.5 0.5" stroke="#8a8a8a" stroke-width="1" fill="none"/></svg>
<div style="position:absolute;left:1149.4px;top:500px;width:1px;height:16px;background:#e0e0e0"></div>
<svg style="position:absolute;left:1185.6px;top:505.5px;" width="10" height="5.5" viewBox="0 0 10 5.5" fill="none"><path d="M0.5 0.5 L5 5 L9.5 0.5" stroke="#8a8a8a" stroke-width="1" fill="none"/></svg>
<div style="position:absolute;left:1292.5px;top:500px;width:1px;height:16px;background:#e0e0e0"></div>
<svg style="position:absolute;left:1364.4px;top:505.5px;" width="10" height="5.5" viewBox="0 0 10 5.5" fill="none"><path d="M0.5 0.5 L5 5 L9.5 0.5" stroke="#8a8a8a" stroke-width="1" fill="none"/></svg>
<div style="position:absolute;left:1454.5px;top:500px;width:1px;height:16px;background:#e0e0e0"></div>
<svg style="position:absolute;left:1552.5px;top:507px;" width="9.5" height="9" viewBox="0 0 9.5 9" fill="none"><rect x="0.5" y="0.5" width="8.5" height="8" rx="0.8" fill="#a0a0a0"/><rect x="2" y="1.5" width="5.5" height="2" fill="#fff"/><rect x="2.3" y="5.5" width="1.3" height="2.5" fill="#fff"/><rect x="6" y="5.5" width="1.3" height="2.5" fill="#fff"/></svg>
<div style="position:absolute;left:201.5px;top:524px;width:1344.5px;height:2px;background:#e1e1e1"></div>
<div style="position:absolute;left:218.5px;top:559px;width:1327.5px;height:1px;background:#ebebeb"></div>
<div style="position:absolute;left:218.5px;top:594px;width:1327.5px;height:1px;background:#ebebeb"></div>
<div style="position:absolute;left:218.5px;top:628px;width:1327.5px;height:1px;background:#ebebeb"></div>
<div style="position:absolute;left:218.5px;top:663px;width:1327.5px;height:1px;background:#ebebeb"></div>
<div style="position:absolute;left:218.5px;top:698px;width:1327.5px;height:1px;background:#ebebeb"></div>
<div style="position:absolute;left:201px;top:733px;width:1368px;height:35px;background:#f3f3f3"></div>
<svg style="position:absolute;left:1423px;top:742px;" width="12" height="11" viewBox="0 0 12 11" fill="none"><path d="M0.6 0.5 V10.5 M5.5 1 L1.8 5.5 L5.5 10 M1.8 5.5 H11.5" stroke="#a8a8a8" stroke-width="1" fill="none"/></svg>
<svg style="position:absolute;left:1459px;top:742px;" width="11" height="11" viewBox="0 0 11 11" fill="none"><path d="M5 1 L0.8 5.5 L5 10 M0.8 5.5 H10.5" stroke="#a8a8a8" stroke-width="1" fill="none"/></svg>
<svg style="position:absolute;left:1541px;top:742px;" width="11" height="11" viewBox="0 0 11 11" fill="none"><path d="M6 1 L10.2 5.5 L6 10 M10.2 5.5 H0.5" stroke="#a8a8a8" stroke-width="1" fill="none"/></svg>
<svg style="position:absolute;left:724.5px;top:823.5px;" width="12.8" height="12.8" viewBox="0 0 12.8 12.8" fill="none"><path d="M6.4 0.5 V12.3 M0.5 6.4 H12.3" stroke="#424242" stroke-width="1.1"/></svg>
<svg style="position:absolute;left:844.9px;top:823.5px;" width="3" height="12" viewBox="0 0 3 12" fill="none"><circle cx="1.5" cy="1.2" r="1" fill="#424242"/><circle cx="1.5" cy="6" r="1" fill="#424242"/><circle cx="1.5" cy="10.8" r="1" fill="#424242"/></svg>
<div style="position:absolute;left:202px;top:847.5px;width:664.2px;height:1px;background:#e6e6e6"></div>
<div style="position:absolute;left:231px;top:859px;width:14px;height:14px;box-sizing:border-box;border:1px solid #7a7a7a;border-radius:2.5px;background:#fff"></div>
<svg style="position:absolute;left:361px;top:861.5px;" width="5.5" height="10" viewBox="0 0 5.5 10" fill="none"><path d="M2.75 0.5 V9.2 M0.5 6.8 L2.75 9.2 L5 6.8" stroke="#424242" stroke-width="1" fill="none"/></svg>
<svg style="position:absolute;left:371px;top:864.2px;" width="7" height="4.5" viewBox="0 0 7 4.5" fill="none"><path d="M0.5 0.5 L3.5 3.6 L6.5 0.5" stroke="#242424" stroke-width="1.1" fill="none"/></svg>
<svg style="position:absolute;left:533.2px;top:864.2px;" width="7" height="4.5" viewBox="0 0 7 4.5" fill="none"><path d="M0.5 0.5 L3.5 3.6 L6.5 0.5" stroke="#242424" stroke-width="1.1" fill="none"/></svg>
<svg style="position:absolute;left:624.2px;top:864.2px;" width="7" height="4.5" viewBox="0 0 7 4.5" fill="none"><path d="M0.5 0.5 L3.5 3.6 L6.5 0.5" stroke="#242424" stroke-width="1.1" fill="none"/></svg>
<svg style="position:absolute;left:822.2px;top:864.2px;" width="7" height="4.5" viewBox="0 0 7 4.5" fill="none"><path d="M0.5 0.5 L3.5 3.6 L6.5 0.5" stroke="#242424" stroke-width="1.1" fill="none"/></svg>
<div style="position:absolute;left:219px;top:884px;width:620px;height:1px;background:#e0e0e0"></div>
<div style="position:absolute;left:231.5px;top:897.4px;width:14px;height:14px;box-sizing:border-box;border:1px solid #7a7a7a;border-radius:2.5px;background:#fff"></div>
<div style="position:absolute;left:219px;top:921px;width:620px;height:1px;background:#ebebeb"></div>
<div style="position:absolute;left:231.5px;top:933.8px;width:14px;height:14px;box-sizing:border-box;border:1px solid #7a7a7a;border-radius:2.5px;background:#fff"></div>
<div style="position:absolute;left:219px;top:958px;width:620px;height:1px;background:#ebebeb"></div>
<svg style="position:absolute;left:1426px;top:823.5px;" width="12.8" height="12.8" viewBox="0 0 12.8 12.8" fill="none"><path d="M6.4 0.5 V12.3 M0.5 6.4 H12.3" stroke="#424242" stroke-width="1.1"/></svg>
<svg style="position:absolute;left:1547.0px;top:823.5px;" width="3" height="12" viewBox="0 0 3 12" fill="none"><circle cx="1.5" cy="1.2" r="1" fill="#424242"/><circle cx="1.5" cy="6" r="1" fill="#424242"/><circle cx="1.5" cy="10.8" r="1" fill="#424242"/></svg>
<div style="position:absolute;left:885.5px;top:847.5px;width:683.0999999999999px;height:1px;background:#e6e6e6"></div>
<div style="position:absolute;left:914.5px;top:859px;width:14px;height:14px;box-sizing:border-box;border:1px solid #7a7a7a;border-radius:2.5px;background:#fff"></div>
<svg style="position:absolute;left:1044.2px;top:861.5px;" width="5.5" height="10" viewBox="0 0 5.5 10" fill="none"><path d="M2.75 0.5 V9.2 M0.5 6.8 L2.75 9.2 L5 6.8" stroke="#424242" stroke-width="1" fill="none"/></svg>
<svg style="position:absolute;left:1054.5px;top:864.2px;" width="7" height="4.5" viewBox="0 0 7 4.5" fill="none"><path d="M0.5 0.5 L3.5 3.6 L6.5 0.5" stroke="#242424" stroke-width="1.1" fill="none"/></svg>
<svg style="position:absolute;left:1222.6px;top:864.2px;" width="7" height="4.5" viewBox="0 0 7 4.5" fill="none"><path d="M0.5 0.5 L3.5 3.6 L6.5 0.5" stroke="#242424" stroke-width="1.1" fill="none"/></svg>
<svg style="position:absolute;left:1317.6px;top:864.2px;" width="7" height="4.5" viewBox="0 0 7 4.5" fill="none"><path d="M0.5 0.5 L3.5 3.6 L6.5 0.5" stroke="#242424" stroke-width="1.1" fill="none"/></svg>
<svg style="position:absolute;left:1524.6px;top:864.2px;" width="7" height="4.5" viewBox="0 0 7 4.5" fill="none"><path d="M0.5 0.5 L3.5 3.6 L6.5 0.5" stroke="#242424" stroke-width="1.1" fill="none"/></svg>
<div style="position:absolute;left:902.5px;top:884px;width:638.5px;height:1px;background:#e0e0e0"></div>
<div style="position:absolute;left:915.0px;top:897.4px;width:14px;height:14px;box-sizing:border-box;border:1px solid #7a7a7a;border-radius:2.5px;background:#fff"></div>
<div style="position:absolute;left:902.5px;top:921px;width:638.5px;height:1px;background:#ebebeb"></div>
<div class="t" style="top:11.70px;font-size:15px;line-height:19px;font-weight:400;color:#fff;-webkit-text-stroke:0.4px #fff;transform:scaleX(0.9246);transform-origin:0 0;left:47.78px;">Dynamics 365</div>
<div class="t" style="top:14.20px;font-size:12.5px;line-height:16px;font-weight:400;color:#fff;transform:scaleX(0.9045);transform-origin:0 0;left:164.50px;">OCLF Demo</div>
<div class="t" style="top:-0.40px;font-size:34.5px;line-height:43px;font-weight:400;color:#f4f6f9;transform:scaleX(0.8825);transform-origin:0 0;left:659.72px;">SANDBOX</div>
<div class="t" style="top:13.50px;font-size:13px;line-height:16px;font-weight:400;color:#fff;transform:scaleX(0.9424);transform-origin:0 0;left:1509.50px;">Copilot</div>
<div class="t" style="top:85.70px;font-size:13px;line-height:16px;font-weight:400;color:#242424;transform:scaleX(0.9508);transform-origin:0 0;left:36.85px;">Home</div>
<div class="t" style="top:116.00px;font-size:13px;line-height:16px;font-weight:400;color:#242424;transform:scaleX(0.8749);transform-origin:0 0;left:36.93px;">Recent</div>
<div class="t" style="top:146.20px;font-size:13px;line-height:16px;font-weight:400;color:#242424;transform:scaleX(0.9300);transform-origin:0 0;left:36.87px;">Pinned</div>
<div class="t" style="top:179.90px;font-size:12.5px;line-height:16px;font-weight:400;color:#242424;-webkit-text-stroke:0.4px #242424;transform:scaleX(1.0041);transform-origin:0 0;left:11.60px;">Insights</div>
<div class="t" style="top:213.90px;font-size:13px;line-height:16px;font-weight:400;color:#242424;transform:scaleX(0.9215);transform-origin:0 0;left:36.88px;">Export Shipment</div>
<div class="t" style="top:244.40px;font-size:13px;line-height:16px;font-weight:400;color:#242424;transform:scaleX(0.9391);transform-origin:0 0;left:36.86px;">Import Shipments</div>
<div class="t" style="top:289.80px;font-size:12.5px;line-height:16px;font-weight:400;color:#242424;-webkit-text-stroke:0.4px #242424;transform:scaleX(0.8516);transform-origin:0 0;left:12.40px;">Cases</div>
<div class="t" style="top:323.50px;font-size:13px;line-height:16px;font-weight:400;color:#242424;transform:scaleX(0.9324);transform-origin:0 0;left:36.87px;">Export Shipments</div>
<div class="t" style="top:353.90px;font-size:13px;line-height:16px;font-weight:400;color:#242424;transform:scaleX(0.9391);transform-origin:0 0;left:36.86px;">Import Shipments</div>
<div class="t" style="top:399.80px;font-size:12.5px;line-height:16px;font-weight:400;color:#242424;-webkit-text-stroke:0.4px #242424;transform:scaleX(0.9508);transform-origin:0 0;left:12.40px;">Customers</div>
<div class="t" style="top:433.00px;font-size:13px;line-height:16px;font-weight:400;color:#242424;transform:scaleX(0.9023);transform-origin:0 0;left:37.80px;">Accounts</div>
<div class="t" style="top:463.30px;font-size:13px;line-height:16px;font-weight:400;color:#242424;transform:scaleX(0.8919);transform-origin:0 0;left:37.80px;">Contacts</div>
<div class="t" style="top:509.80px;font-size:12.5px;line-height:16px;font-weight:400;color:#242424;-webkit-text-stroke:0.4px #242424;transform:scaleX(0.9887);transform-origin:0 0;left:12.40px;">Operations</div>
<div class="t" style="top:543.00px;font-size:13px;line-height:16px;font-weight:400;color:#242424;transform:scaleX(0.8932);transform-origin:0 0;left:37.80px;">Containers</div>
<div class="t" style="top:573.10px;font-size:13px;line-height:16px;font-weight:400;color:#242424;transform:scaleX(0.8785);transform-origin:0 0;left:37.80px;">Transports</div>
<div class="t" style="top:603.40px;font-size:13px;line-height:16px;font-weight:400;color:#242424;transform:scaleX(0.8538);transform-origin:0 0;left:37.80px;">Costs</div>
<div class="t" style="top:633.70px;font-size:13px;line-height:16px;font-weight:400;color:#242424;transform:scaleX(0.9365);transform-origin:0 0;left:36.86px;">Invoices &amp; Credit No...</div>
<div class="t" style="top:966.00px;font-size:10px;line-height:12px;font-weight:400;color:#fff;-webkit-text-stroke:0.4px #fff;left:15.50px;">H</div>
<div class="t" style="top:965.90px;font-size:13px;line-height:16px;font-weight:400;color:#242424;-webkit-text-stroke:0.4px #242424;transform:scaleX(0.9691);transform-origin:0 0;left:36.63px;">Home</div>
<div class="t" style="top:60.50px;font-size:12.5px;line-height:16px;font-weight:400;color:#242424;transform:scaleX(0.8550);transform-origin:0 0;left:330.75px;">Save</div>
<div class="t" style="top:60.50px;font-size:12.5px;line-height:16px;font-weight:400;color:#242424;transform:scaleX(0.9290);transform-origin:0 0;left:395.60px;">Save &amp; Close</div>
<div class="t" style="top:60.50px;font-size:12.5px;line-height:16px;font-weight:400;color:#242424;transform:scaleX(0.9608);transform-origin:0 0;left:505.64px;">New</div>
<div class="t" style="top:60.50px;font-size:12.5px;line-height:16px;font-weight:400;color:#242424;transform:scaleX(0.9638);transform-origin:0 0;left:570.04px;">Deactivate</div>
<div class="t" style="top:60.50px;font-size:12.5px;line-height:16px;font-weight:400;color:#242424;transform:scaleX(0.9664);transform-origin:0 0;left:667.03px;">Delete</div>
<div class="t" style="top:60.50px;font-size:12.5px;line-height:16px;font-weight:400;color:#242424;transform:scaleX(0.9109);transform-origin:0 0;left:742.09px;">Refresh</div>
<div class="t" style="top:60.50px;font-size:12.5px;line-height:16px;font-weight:400;color:#242424;transform:scaleX(0.8943);transform-origin:0 0;left:823.40px;">Check Access</div>
<div class="t" style="top:60.50px;font-size:12.5px;line-height:16px;font-weight:400;color:#242424;transform:scaleX(0.9376);transform-origin:0 0;left:934.06px;">Export to PDF</div>
<div class="t" style="top:60.50px;font-size:12.5px;line-height:16px;font-weight:400;color:#242424;transform:scaleX(0.9111);transform-origin:0 0;left:1048.09px;">Process</div>
<div class="t" style="top:60.50px;font-size:12.5px;line-height:16px;font-weight:400;color:#242424;transform:scaleX(0.9130);transform-origin:0 0;left:1154.70px;">Assign</div>
<div class="t" style="top:60.50px;font-size:12.5px;line-height:16px;font-weight:400;color:#242424;transform:scaleX(0.9482);transform-origin:0 0;left:1228.75px;">Flow</div>
<div class="t" style="top:61.50px;font-size:11px;line-height:14px;font-weight:400;color:#242424;transform:scaleX(0.8551);transform-origin:0 0;left:1526.50px;">Share</div>
<div class="t" style="top:117.10px;font-size:17px;line-height:21px;font-weight:400;color:#242424;transform:scaleX(0.9151);transform-origin:0 0;left:205.60px;-webkit-text-stroke:0.45px #242424;">SE260100031</div>
<div class="t" style="top:121.90px;font-size:11.5px;line-height:14px;font-weight:400;color:#616161;transform:scaleX(1.0189);transform-origin:0 0;left:310.00px;">- Unsaved</div>
<div class="t" style="top:143.40px;font-size:11.5px;line-height:14px;font-weight:400;color:#424242;-webkit-text-stroke:0.4px #424242;transform:scaleX(1.0424);transform-origin:0 0;left:205.25px;">Shipment</div>
<div class="t" style="top:143.40px;font-size:11.5px;line-height:14px;font-weight:400;color:#424242;-webkit-text-stroke:0.4px #424242;transform:scaleX(1.0523);transform-origin:0 0;left:276.90px;">Export Shipments</div>
<div class="t" style="top:173.50px;font-size:12.3px;line-height:15px;font-weight:400;color:#fff;-webkit-text-stroke:0.4px #fff;transform:scaleX(0.9696);transform-origin:0 0;left:200.40px;">Shipment Process</div>
<div class="t" style="top:188.70px;font-size:10.5px;line-height:13px;font-weight:400;color:#fff;transform:scaleX(0.9772);transform-origin:0 0;left:200.40px;">Active for 9 days</div>
<div class="t" style="top:188.50px;font-size:12px;line-height:15px;font-weight:400;color:#424242;transform:scaleX(0.9954);transform-origin:0 0;left:464.20px;">Shipment Type</div>
<div class="t" style="top:188.50px;font-size:12px;line-height:15px;font-weight:400;color:#424242;transform:scaleX(1.0260);transform-origin:0 0;left:710.20px;">Booking</div>
<div class="t" style="top:188.50px;font-size:12px;line-height:15px;font-weight:400;color:#424242;transform:scaleX(0.9695);transform-origin:0 0;left:920.00px;">Transport</div>
<div class="t" style="top:188.50px;font-size:12px;line-height:15px;font-weight:400;color:#242424;-webkit-text-stroke:0.4px #242424;transform:scaleX(1.0245);transform-origin:0 0;left:1136.50px;">Documentation  (7 Hrs)</div>
<div class="t" style="top:188.50px;font-size:12px;line-height:15px;font-weight:400;color:#424242;transform:scaleX(0.9872);transform-origin:0 0;left:1424.50px;">Departure</div>
<div class="t" style="top:119.50px;font-size:12.5px;line-height:16px;font-weight:400;color:#115ea3;-webkit-text-stroke:0.4px #115ea3;transform:scaleX(0.9792);transform-origin:0 0;left:1435.00px;">Souhaib Hlalem</div>
<div class="t" style="top:136.00px;font-size:10.5px;line-height:13px;font-weight:400;color:#616161;transform:scaleX(0.9545);transform-origin:0 0;left:1435.00px;">Owner</div>
<div class="t" style="top:223.50px;font-size:14.5px;line-height:18px;font-weight:400;color:#424242;transform:scaleX(0.9004);transform-origin:0 0;left:206.00px;">General</div>
<div class="t" style="top:223.50px;font-size:14.5px;line-height:18px;font-weight:400;color:#424242;transform:scaleX(0.9465);transform-origin:0 0;left:271.90px;">Operations</div>
<div class="t" style="top:223.50px;font-size:14.5px;line-height:18px;font-weight:400;color:#242424;-webkit-text-stroke:0.4px #242424;transform:scaleX(0.9439);transform-origin:0 0;left:357.81px;">Financial</div>
<div class="t" style="top:223.50px;font-size:14.5px;line-height:18px;font-weight:400;color:#424242;transform:scaleX(0.9079);transform-origin:0 0;left:430.00px;">Claims</div>
<div class="t" style="top:223.50px;font-size:14.5px;line-height:18px;font-weight:400;color:#424242;transform:scaleX(0.9572);transform-origin:0 0;left:488.04px;">Documents</div>
<div class="t" style="top:223.50px;font-size:14.5px;line-height:18px;font-weight:400;color:#424242;transform:scaleX(0.9241);transform-origin:0 0;left:576.88px;">Related</div>
<div class="t" style="top:239.00px;font-size:12.5px;line-height:16px;font-weight:400;color:#242424;-webkit-text-stroke:0.4px #242424;transform:scaleX(0.9455);transform-origin:0 0;left:1509.65px;">Form assist</div>
<div class="t" style="top:281.75px;font-size:12.5px;line-height:16px;font-weight:400;color:#242424;-webkit-text-stroke:0.4px #242424;transform:scaleX(0.9691);transform-origin:0 0;left:201.03px;">Financial overview</div>
<div class="t" style="top:330.80px;font-size:12.5px;line-height:16px;font-weight:400;color:#242424;transform:scaleX(0.9392);transform-origin:0 0;left:202.00px;">Total Buying</div>
<div class="t" style="top:335.10px;font-size:12px;line-height:15px;font-weight:400;color:#242424;transform:scaleX(0.9495);transform-origin:0 0;left:371.10px;">€3,290.00</div>
<div class="t" style="top:356.75px;font-size:12.5px;line-height:16px;font-weight:400;color:#242424;transform:scaleX(0.9558);transform-origin:0 0;left:201.04px;">Last updated:</div>
<div class="t" style="top:356.75px;font-size:12.5px;line-height:16px;font-weight:400;color:#242424;transform:scaleX(0.9599);transform-origin:0 0;left:361.10px;">1/22/2026 4:28 PM</div>
<div class="t" style="top:330.80px;font-size:12.5px;line-height:16px;font-weight:400;color:#242424;transform:scaleX(0.9489);transform-origin:0 0;left:652.80px;">Total Selling</div>
<div class="t" style="top:335.10px;font-size:12px;line-height:15px;font-weight:400;color:#242424;transform:scaleX(0.9495);transform-origin:0 0;left:822.70px;">€3,652.00</div>
<div class="t" style="top:356.75px;font-size:12.5px;line-height:16px;font-weight:400;color:#242424;transform:scaleX(0.9558);transform-origin:0 0;left:651.84px;">Last updated:</div>
<div class="t" style="top:356.75px;font-size:12.5px;line-height:16px;font-weight:400;color:#242424;transform:scaleX(0.9599);transform-origin:0 0;left:812.70px;">1/22/2026 4:28 PM</div>
<div class="t" style="top:330.90px;font-size:12.5px;line-height:16px;font-weight:400;color:#242424;transform:scaleX(0.9860);transform-origin:0 0;left:1102.71px;">Profit</div>
<div class="t" style="top:335.10px;font-size:12px;line-height:15px;font-weight:400;color:#242424;transform:scaleX(0.9519);transform-origin:0 0;left:1274.00px;">€362.00</div>
<div class="t" style="top:435.00px;font-size:12.5px;line-height:16px;font-weight:400;color:#242424;-webkit-text-stroke:0.4px #242424;transform:scaleX(0.9898);transform-origin:0 0;left:202.00px;">All Costs for this Shipment</div>
<div class="t" style="top:435.00px;font-size:12.5px;line-height:16px;font-weight:400;color:#242424;transform:scaleX(0.9421);transform-origin:0 0;left:1143.76px;">New Cost</div>
<div class="t" style="top:435.00px;font-size:12.5px;line-height:16px;font-weight:400;color:#242424;transform:scaleX(0.9376);transform-origin:0 0;left:1246.00px;">Add Existing Cost</div>
<div class="t" style="top:435.00px;font-size:12.5px;line-height:16px;font-weight:400;color:#242424;transform:scaleX(0.9109);transform-origin:0 0;left:1388.79px;">Refresh</div>
<div class="t" style="top:435.00px;font-size:12.5px;line-height:16px;font-weight:400;color:#242424;transform:scaleX(0.9369);transform-origin:0 0;left:1478.06px;">Flow</div>
<div class="t" style="top:471.10px;font-size:13px;line-height:16px;font-weight:400;color:#242424;-webkit-text-stroke:0.4px #242424;transform:scaleX(0.9603);transform-origin:0 0;left:219.00px;">Group By:</div>
<div class="t" style="top:471.60px;font-size:12.5px;line-height:16px;font-weight:400;color:#424242;transform:scaleX(0.9920);transform-origin:0 0;left:291.70px;">(no grouping)</div>
<div class="t" style="top:501.30px;font-size:10.8px;line-height:14px;font-weight:400;color:#6e6e6e;transform:scaleX(0.9094);transform-origin:0 0;left:246.70px;">Cost Type</div>
<div class="t" style="top:501.30px;font-size:10.8px;line-height:14px;font-weight:400;color:#6e6e6e;transform:scaleX(0.9577);transform-origin:0 0;left:389.00px;">Art Code</div>
<div class="t" style="top:501.30px;font-size:10.8px;line-height:14px;font-weight:400;color:#6e6e6e;transform:scaleX(0.9246);transform-origin:0 0;left:532.00px;">Supplier</div>
<div class="t" style="top:501.30px;font-size:10.8px;line-height:14px;font-weight:400;color:#6e6e6e;transform:scaleX(0.8767);transform-origin:0 0;left:674.60px;">VAT %</div>
<div class="t" style="top:501.30px;font-size:10.8px;line-height:14px;font-weight:400;color:#6e6e6e;transform:scaleX(0.9683);transform-origin:0 0;left:817.60px;">Buying Amount</div>
<div class="t" style="top:501.30px;font-size:10.8px;line-height:14px;font-weight:400;color:#6e6e6e;transform:scaleX(0.9639);transform-origin:0 0;left:987.00px;">Selling Amount</div>
<div class="t" style="top:501.30px;font-size:10.8px;line-height:14px;font-weight:400;color:#6e6e6e;transform:scaleX(0.9762);transform-origin:0 0;left:1156.00px;">Profit</div>
<div class="t" style="top:501.30px;font-size:10.8px;line-height:14px;font-weight:400;color:#6e6e6e;transform:scaleX(0.9235);transform-origin:0 0;left:1299.00px;">Total Incl VAT</div>
<div class="t" style="top:535.10px;font-size:13px;line-height:16px;font-weight:400;color:#3b3b3b;transform:scaleX(0.9663);transform-origin:0 0;left:245.73px;">Fuel Surcharge</div>
<div class="t" style="top:535.10px;font-size:13px;line-height:16px;font-weight:400;color:#3b3b3b;transform:scaleX(0.7998);transform-origin:0 0;left:388.50px;">FS</div>
<div class="t" style="top:535.10px;font-size:13px;line-height:16px;font-weight:400;color:#3b3b3b;transform:scaleX(0.9484);transform-origin:0 0;left:532.20px;">COSCO Shipping</div>
<div class="t" style="top:535.10px;font-size:13px;line-height:16px;font-weight:400;color:#3b3b3b;transform:scaleX(1.1455);transform-origin:100% 0;right:797.12px;">---</div>
<div class="t" style="top:535.10px;font-size:13px;line-height:16px;font-weight:400;color:#3b3b3b;transform:scaleX(0.9330);transform-origin:100% 0;right:627.79px;">€180.00</div>
<div class="t" style="top:535.10px;font-size:13px;line-height:16px;font-weight:400;color:#3b3b3b;transform:scaleX(0.9330);transform-origin:100% 0;right:458.99px;">€240.00</div>
<div class="t" style="top:535.10px;font-size:13px;line-height:16px;font-weight:400;color:#3b3b3b;transform:scaleX(0.9330);transform-origin:100% 0;right:316.29px;">€60.00</div>
<div class="t" style="top:535.10px;font-size:13px;line-height:16px;font-weight:400;color:#3b3b3b;transform:scaleX(0.9330);transform-origin:100% 0;right:153.59px;">€240.00</div>
<div class="t" style="top:569.70px;font-size:13px;line-height:16px;font-weight:400;color:#3b3b3b;transform:scaleX(0.9654);transform-origin:0 0;left:246.70px;">Ocean Freight</div>
<div class="t" style="top:569.70px;font-size:13px;line-height:16px;font-weight:400;color:#3b3b3b;transform:scaleX(0.8124);transform-origin:0 0;left:389.30px;">SEA</div>
<div class="t" style="top:569.70px;font-size:13px;line-height:16px;font-weight:400;color:#3b3b3b;transform:scaleX(0.9484);transform-origin:0 0;left:532.20px;">COSCO Shipping</div>
<div class="t" style="top:569.70px;font-size:13px;line-height:16px;font-weight:400;color:#3b3b3b;transform:scaleX(1.1455);transform-origin:100% 0;right:797.12px;">---</div>
<div class="t" style="top:569.70px;font-size:13px;line-height:16px;font-weight:400;color:#3b3b3b;transform:scaleX(0.9330);transform-origin:100% 0;right:627.79px;">€2,300.00</div>
<div class="t" style="top:569.70px;font-size:13px;line-height:16px;font-weight:400;color:#3b3b3b;transform:scaleX(0.9330);transform-origin:100% 0;right:458.99px;">€2,950.00</div>
<div class="t" style="top:569.70px;font-size:13px;line-height:16px;font-weight:400;color:#3b3b3b;transform:scaleX(0.9330);transform-origin:100% 0;right:316.29px;">€650.00</div>
<div class="t" style="top:569.70px;font-size:13px;line-height:16px;font-weight:400;color:#3b3b3b;transform:scaleX(0.9330);transform-origin:100% 0;right:153.59px;">€2,950.00</div>
<div class="t" style="top:604.30px;font-size:13px;line-height:16px;font-weight:400;color:#3b3b3b;transform:scaleX(0.9813);transform-origin:0 0;left:246.70px;">Terminal Handling C...</div>
<div class="t" style="top:604.30px;font-size:13px;line-height:16px;font-weight:400;color:#3b3b3b;transform:scaleX(0.8831);transform-origin:0 0;left:389.30px;">THC</div>
<div class="t" style="top:604.30px;font-size:13px;line-height:16px;font-weight:400;color:#3b3b3b;transform:scaleX(1.0270);transform-origin:0 0;left:531.17px;">Port of Antwerp</div>
<div class="t" style="top:604.30px;font-size:13px;line-height:16px;font-weight:400;color:#3b3b3b;transform:scaleX(0.9330);transform-origin:100% 0;right:797.29px;">21</div>
<div class="t" style="top:604.30px;font-size:13px;line-height:16px;font-weight:400;color:#3b3b3b;transform:scaleX(0.9330);transform-origin:100% 0;right:627.79px;">€340.00</div>
<div class="t" style="top:604.30px;font-size:13px;line-height:16px;font-weight:400;color:#3b3b3b;transform:scaleX(0.9330);transform-origin:100% 0;right:458.99px;">€420.00</div>
<div class="t" style="top:604.30px;font-size:13px;line-height:16px;font-weight:400;color:#3b3b3b;transform:scaleX(0.9330);transform-origin:100% 0;right:316.29px;">€80.00</div>
<div class="t" style="top:604.30px;font-size:13px;line-height:16px;font-weight:400;color:#3b3b3b;transform:scaleX(0.9330);transform-origin:100% 0;right:153.59px;">€508.20</div>
<div class="t" style="top:638.90px;font-size:13px;line-height:16px;font-weight:400;color:#3b3b3b;transform:scaleX(0.9717);transform-origin:0 0;left:245.73px;">Precarriage</div>
<div class="t" style="top:638.90px;font-size:13px;line-height:16px;font-weight:400;color:#3b3b3b;transform:scaleX(0.8159);transform-origin:0 0;left:388.48px;">LSS</div>
<div class="t" style="top:638.90px;font-size:13px;line-height:16px;font-weight:400;color:#3b3b3b;transform:scaleX(0.9476);transform-origin:0 0;left:531.25px;">DCTS Logistiek</div>
<div class="t" style="top:638.90px;font-size:13px;line-height:16px;font-weight:400;color:#3b3b3b;transform:scaleX(0.9330);transform-origin:100% 0;right:797.29px;">21</div>
<div class="t" style="top:638.90px;font-size:13px;line-height:16px;font-weight:400;color:#3b3b3b;transform:scaleX(0.9330);transform-origin:100% 0;right:627.79px;">€470.00</div>
<div class="t" style="top:638.90px;font-size:13px;line-height:16px;font-weight:400;color:#3b3b3b;transform:scaleX(0.9330);transform-origin:100% 0;right:458.99px;">€630.00</div>
<div class="t" style="top:638.90px;font-size:13px;line-height:16px;font-weight:400;color:#3b3b3b;transform:scaleX(0.9330);transform-origin:100% 0;right:316.29px;">€160.00</div>
<div class="t" style="top:638.90px;font-size:13px;line-height:16px;font-weight:400;color:#3b3b3b;transform:scaleX(0.9330);transform-origin:100% 0;right:153.59px;">€762.30</div>
<div class="t" style="top:673.50px;font-size:13px;line-height:16px;font-weight:400;color:#3b3b3b;transform:scaleX(0.9481);transform-origin:0 0;left:246.70px;">Customs</div>
<div class="t" style="top:673.50px;font-size:13px;line-height:16px;font-weight:400;color:#3b3b3b;transform:scaleX(0.8542);transform-origin:0 0;left:389.30px;">XXX</div>
<div class="t" style="top:673.50px;font-size:13px;line-height:16px;font-weight:400;color:#3b3b3b;transform:scaleX(1.1455);transform-origin:0 0;left:532.20px;">---</div>
<div class="t" style="top:673.50px;font-size:13px;line-height:16px;font-weight:400;color:#3b3b3b;transform:scaleX(1.1455);transform-origin:100% 0;right:797.12px;">---</div>
<div class="t" style="top:673.50px;font-size:13px;line-height:16px;font-weight:400;color:#3b3b3b;transform:scaleX(1.1455);transform-origin:100% 0;right:627.62px;">---</div>
<div class="t" style="top:673.50px;font-size:13px;line-height:16px;font-weight:400;color:#3b3b3b;transform:scaleX(1.1455);transform-origin:100% 0;right:458.82px;">---</div>
<div class="t" style="top:673.50px;font-size:13px;line-height:16px;font-weight:400;color:#3b3b3b;transform:scaleX(1.1455);transform-origin:100% 0;right:316.12px;">---</div>
<div class="t" style="top:673.50px;font-size:13px;line-height:16px;font-weight:400;color:#3b3b3b;transform:scaleX(1.1455);transform-origin:100% 0;right:153.42px;">---</div>
<div class="t" style="top:708.10px;font-size:13px;line-height:16px;font-weight:400;color:#3b3b3b;transform:scaleX(1.0073);transform-origin:0 0;left:246.70px;">Credit Note</div>
<div class="t" style="top:708.10px;font-size:13px;line-height:16px;font-weight:400;color:#3b3b3b;transform:scaleX(0.8542);transform-origin:0 0;left:389.30px;">XXX</div>
<div class="t" style="top:708.10px;font-size:13px;line-height:16px;font-weight:400;color:#3b3b3b;transform:scaleX(1.1455);transform-origin:0 0;left:532.20px;">---</div>
<div class="t" style="top:708.10px;font-size:13px;line-height:16px;font-weight:400;color:#3b3b3b;transform:scaleX(1.1455);transform-origin:100% 0;right:797.12px;">---</div>
<div class="t" style="top:708.10px;font-size:13px;line-height:16px;font-weight:400;color:#3b3b3b;transform:scaleX(1.1455);transform-origin:100% 0;right:627.62px;">---</div>
<div class="t" style="top:708.10px;font-size:13px;line-height:16px;font-weight:400;color:#3b3b3b;transform:scaleX(0.9330);transform-origin:100% 0;right:458.89px;">(€588.00)</div>
<div class="t" style="top:708.10px;font-size:13px;line-height:16px;font-weight:400;color:#3b3b3b;transform:scaleX(1.1455);transform-origin:100% 0;right:316.12px;">---</div>
<div class="t" style="top:708.10px;font-size:13px;line-height:16px;font-weight:400;color:#3b3b3b;transform:scaleX(0.9330);transform-origin:100% 0;right:153.49px;">(€588.00)</div>
<div class="t" style="top:742.00px;font-size:11px;line-height:14px;font-weight:400;color:#242424;transform:scaleX(0.8634);transform-origin:0 0;left:1490.00px;">Page 1</div>
<div class="t" style="top:822.00px;font-size:12.5px;line-height:16px;font-weight:400;color:#242424;-webkit-text-stroke:0.4px #242424;transform:scaleX(0.9888);transform-origin:0 0;left:201.01px;">Invoices</div>
<div class="t" style="top:822.90px;font-size:12px;line-height:15px;font-weight:400;color:#242424;transform:scaleX(0.9895);transform-origin:0 0;left:751.00px;">New Invoice</div>
<div class="t" style="top:859.60px;font-size:12.5px;line-height:16px;font-weight:400;color:#242424;-webkit-text-stroke:0.4px #242424;transform:scaleX(1.0026);transform-origin:0 0;left:266.60px;">Invoice Number</div>
<div class="t" style="top:859.60px;font-size:12.5px;line-height:16px;font-weight:400;color:#242424;-webkit-text-stroke:0.4px #242424;transform:scaleX(0.9792);transform-origin:0 0;left:460.52px;">Invoice Date</div>
<div class="t" style="top:859.60px;font-size:12.5px;line-height:16px;font-weight:400;color:#242424;-webkit-text-stroke:0.4px #242424;transform:scaleX(0.9721);transform-origin:0 0;left:568.33px;">Due Date</div>
<div class="t" style="top:859.60px;font-size:12.5px;line-height:16px;font-weight:400;color:#242424;-webkit-text-stroke:0.4px #242424;transform:scaleX(0.9888);transform-origin:0 0;left:680.31px;">Invoice Amount Incl. VAT</div>
<div class="t" style="top:896.60px;font-size:12.5px;line-height:16px;font-weight:400;color:#115ea3;transform:scaleX(0.8906);transform-origin:0 0;left:267.60px;">26121</div>
<div class="t" style="top:896.60px;font-size:12.5px;line-height:16px;font-weight:400;color:#242424;transform:scaleX(0.9753);transform-origin:0 0;left:461.50px;">1/9/2026</div>
<div class="t" style="top:896.60px;font-size:12.5px;line-height:16px;font-weight:400;color:#242424;transform:scaleX(0.9837);transform-origin:0 0;left:569.00px;">2/24/2026</div>
<div class="t" style="top:896.60px;font-size:12.5px;line-height:16px;font-weight:400;color:#242424;transform:scaleX(0.9163);transform-origin:100% 0;right:770.54px;">€3,190.00</div>
<div class="t" style="top:933.00px;font-size:12.5px;line-height:16px;font-weight:400;color:#115ea3;transform:scaleX(0.9193);transform-origin:0 0;left:267.60px;">26120</div>
<div class="t" style="top:933.00px;font-size:12.5px;line-height:16px;font-weight:400;color:#242424;transform:scaleX(0.9753);transform-origin:0 0;left:461.50px;">1/8/2026</div>
<div class="t" style="top:933.00px;font-size:12.5px;line-height:16px;font-weight:400;color:#242424;transform:scaleX(0.9907);transform-origin:0 0;left:569.00px;">2/8/2026</div>
<div class="t" style="top:933.00px;font-size:12.5px;line-height:16px;font-weight:400;color:#242424;transform:scaleX(0.9163);transform-origin:100% 0;right:770.54px;">€1,270.50</div>
<div class="t" style="top:822.00px;font-size:12.5px;line-height:16px;font-weight:400;color:#242424;-webkit-text-stroke:0.4px #242424;transform:scaleX(0.9911);transform-origin:0 0;left:885.50px;">Credit Notes</div>
<div class="t" style="top:822.90px;font-size:12px;line-height:15px;font-weight:400;color:#242424;transform:scaleX(0.9895);transform-origin:0 0;left:1452.50px;">New Invoice</div>
<div class="t" style="top:859.60px;font-size:12.5px;line-height:16px;font-weight:400;color:#242424;-webkit-text-stroke:0.4px #242424;transform:scaleX(1.0026);transform-origin:0 0;left:949.80px;">Invoice Number</div>
<div class="t" style="top:859.60px;font-size:12.5px;line-height:16px;font-weight:400;color:#242424;-webkit-text-stroke:0.4px #242424;transform:scaleX(0.9792);transform-origin:0 0;left:1149.82px;">Invoice Date</div>
<div class="t" style="top:859.60px;font-size:12.5px;line-height:16px;font-weight:400;color:#242424;-webkit-text-stroke:0.4px #242424;transform:scaleX(0.9721);transform-origin:0 0;left:1261.73px;">Due Date</div>
<div class="t" style="top:859.60px;font-size:12.5px;line-height:16px;font-weight:400;color:#242424;-webkit-text-stroke:0.4px #242424;transform:scaleX(0.9888);transform-origin:0 0;left:1382.71px;">Invoice Amount Incl. VAT</div>
<div class="t" style="top:896.60px;font-size:12.5px;line-height:16px;font-weight:400;color:#115ea3;transform:scaleX(0.9193);transform-origin:0 0;left:950.80px;">26130</div>
<div class="t" style="top:896.60px;font-size:12.5px;line-height:16px;font-weight:400;color:#242424;transform:scaleX(0.9846);transform-origin:0 0;left:1150.80px;">1/15/2026</div>
<div class="t" style="top:896.60px;font-size:12.5px;line-height:16px;font-weight:400;color:#242424;transform:scaleX(0.9846);transform-origin:0 0;left:1262.40px;">1/22/2026</div>
<div class="t" style="top:896.60px;font-size:12.5px;line-height:16px;font-weight:400;color:#242424;transform:scaleX(0.9035);transform-origin:100% 0;right:68.85px;">(€588.00)</div>
</body></html>
